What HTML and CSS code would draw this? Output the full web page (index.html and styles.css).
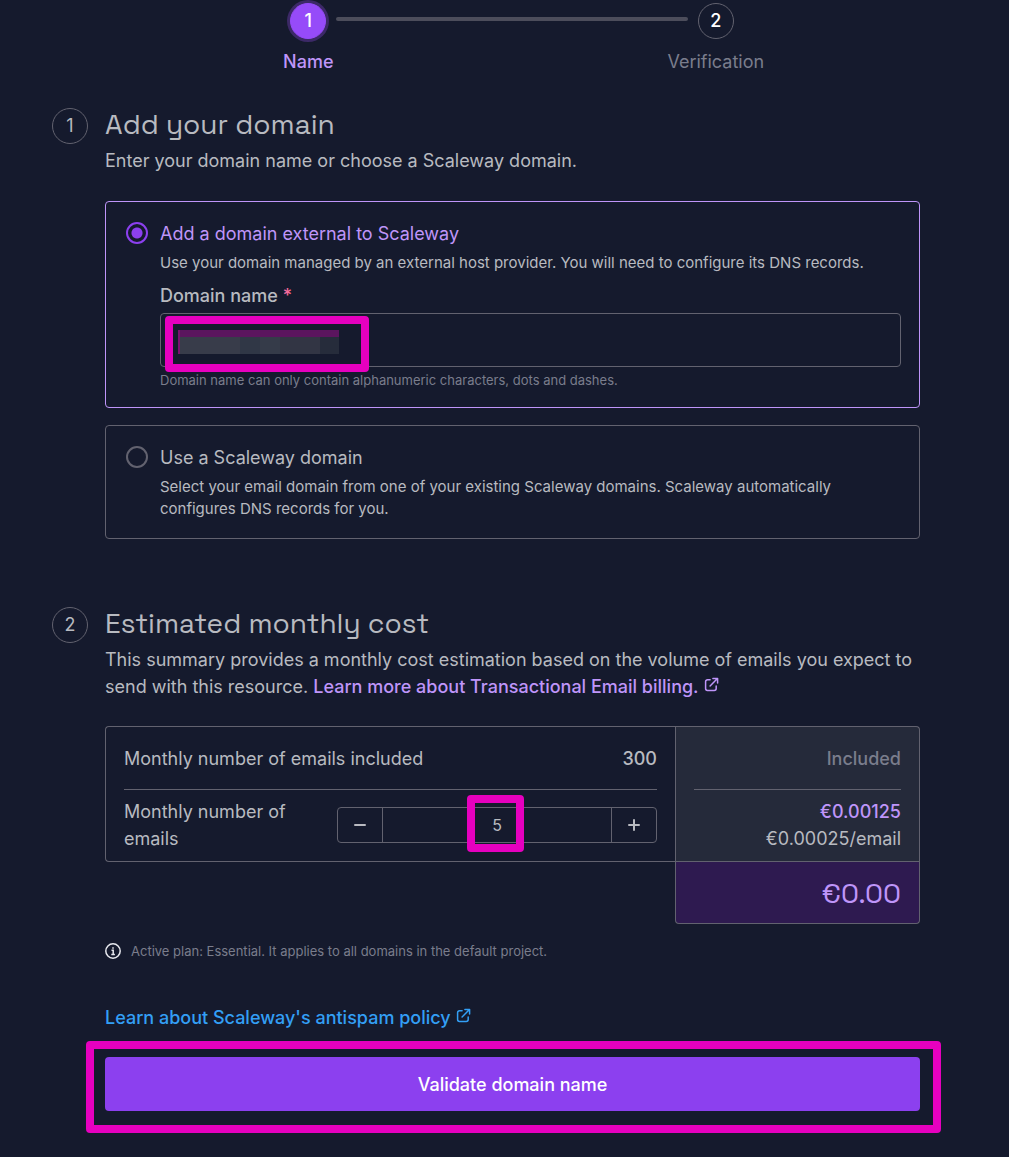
FILE: index.html
```html
<!DOCTYPE html>
<html lang="en">
<head>
<meta charset="utf-8">
<meta name="viewport" content="width=device-width, initial-scale=1">
<title>Add a domain</title>
<link rel="stylesheet" href="styles.css">
</head>
<body>
<form class="page">
  <ol class="progress">
    <li class="progress-step current"><span class="dot">1</span><span>Name</span></li>
    <li class="progress-line" aria-hidden="true"></li>
    <li class="progress-step"><span class="dot">2</span><span>Verification</span></li>
  </ol>

  <section class="section">
    <span class="section-number">1</span>
    <div class="section-body">
      <h2 class="title">Add your domain</h2>
      <p class="intro">Enter your domain name or choose a Scaleway domain.</p>
      <div class="options">
        <div class="option selected">
          <input class="radio" type="radio" name="kind" id="external" checked>
          <div class="option-body">
            <label class="option-title" for="external">Add a domain external to Scaleway</label>
            <p class="option-text">Use your domain managed by an external host provider. You will need to configure its DNS records.</p>
            <label class="field-label" for="domain">Domain name <span class="required">*</span></label>
            <div class="field">
              <input class="text-input" type="text" id="domain" aria-describedby="hint">
              <div class="highlight field-highlight"><div class="redacted"></div></div>
            </div>
            <p class="hint" id="hint">Domain name can only contain alphanumeric characters, dots and dashes.</p>
          </div>
        </div>
        <div class="option">
          <input class="radio" type="radio" name="kind" id="internal">
          <div class="option-body">
            <label class="option-title" for="internal">Use a Scaleway domain</label>
            <p class="option-text">Select your email domain from one of your existing Scaleway domains. Scaleway automatically configures DNS records for you.</p>
          </div>
        </div>
      </div>
    </div>
  </section>

  <section class="section">
    <span class="section-number">2</span>
    <div class="section-body">
      <h2 class="title">Estimated monthly cost</h2>
      <p class="intro">This summary provides a monthly cost estimation based on the volume of emails you expect to send with this resource. <a class="link" href="#">Learn more about Transactional Email billing.<svg class="external" viewBox="0 0 16 16" aria-hidden="true"><path d="M6.5 3H3.7A2 2 0 0 0 1.700 5v7.300a2 2 0 0 0 2 2H11a2 2 0 0 0 2-2V9.500M9.500 1.500h5v5M14.300 1.700 6.500 9.500"/></svg></a></p>

      <table class="cost">
        <tbody>
          <tr>
            <td class="item"><div class="line first"><span>Monthly number of emails included</span><strong>300</strong></div></td>
            <td class="price"><div class="line first muted">Included</div></td>
          </tr>
          <tr class="last">
            <td class="item">
              <div class="line">
                <label class="quantity-label" for="quantity">Monthly number of emails</label>
                <div class="quantity">
                  <button class="quantity-button" type="button" aria-label="Decrease"><svg viewBox="0 0 12 12"><path d="M1 6h10"/></svg></button>
                  <input class="quantity-input" id="quantity" type="text" inputmode="numeric" value="5">
                  <button class="quantity-button" type="button" aria-label="Increase"><svg viewBox="0 0 12 12"><path d="M1 6h10M6 1v10"/></svg></button>
                  <div class="highlight quantity-highlight"></div>
                </div>
              </div>
            </td>
            <td class="price"><div class="line amounts"><strong class="accent">€0.00125</strong><span>€0.00025/email</span></div></td>
          </tr>
          <tr>
            <td></td>
            <td class="total">€0.00</td>
          </tr>
        </tbody>
      </table>

      <p class="plan"><svg class="info" viewBox="0 0 16 16" aria-hidden="true"><circle cx="8" cy="8" r="7.200"/><path d="M6.500 7.300H8.200V11.300M6.300 11.500h3.600M8 4.200v1.600"/></svg>Active plan: Essential. It applies to all domains in the default project.</p>
      <p class="policy"><a class="link info-link" href="#">Learn about Scaleway's antispam policy<svg class="external" viewBox="0 0 16 16" aria-hidden="true"><path d="M6.500 3H3.700A2 2 0 0 0 1.700 5v7.300a2 2 0 0 0 2 2H11a2 2 0 0 0 2-2V9.500M9.500 1.500h5v5M14.300 1.700 6.500 9.500"/></svg></a></p>
      <div class="submit-area">
        <button class="submit" type="submit">Validate domain name</button>
        <div class="highlight submit-highlight"></div>
      </div>
    </div>
  </section>
</form>
</body>
</html>
```
FILE: styles.css
```css
* { box-sizing: border-box; }

:root {
  --bg: #151a2d;
  --text: #b8bac0;
  --muted: #7a7d8c;
  --border: #62626f;
  --accent: #bf95f9;
  --primary: #8c40ef;
  --mark: #e600bf;
}

body {
  margin: 0;
  background: var(--bg);
  color: var(--text);
  font: 400 18px/27px Inter, "Liberation Sans", sans-serif;
}

p, h2, ol { margin: 0; padding: 0; }
strong { font-weight: 500; }
input, button { font: inherit; color: inherit; }

.page { padding: 3px 89px 46px 52px; }

/* Progress */
.progress {
  display: grid;
  grid-template-columns: 96px 1fr 96px;
  margin: 0 18% 33px 24%;
  list-style: none;
}
.progress-step {
  display: flex;
  flex-direction: column;
  align-items: center;
  gap: 9px;
  color: var(--muted);
}
.progress-step.current { color: var(--accent); font-weight: 500; }
.dot {
  width: 36px;
  height: 36px;
  border: 1px solid var(--border);
  border-radius: 50%;
  color: #fff;
  font-weight: 500;
  line-height: 34px;
  text-align: center;
}
.current .dot {
  background: #964bf9;
  border-color: #964bf9;
  box-shadow: 0 0 0 3px #3c2967;
}
.progress-line {
  height: 4px;
  margin: 14px -20px 0;
  border-radius: 2px;
  background: #4c4d5b;
}

/* Sections */
.section {
  display: grid;
  grid-template-columns: 36px minmax(0, 1fr);
  column-gap: 17px;
}
.section + .section { margin-top: 68px; }
.section-number {
  height: 36px;
  border: 1px solid var(--border);
  border-radius: 50%;
  line-height: 34px;
  text-align: center;
}
.title {
  margin-bottom: 7px;
  font: 400 28px/32px "Space Grotesk", Inter, sans-serif;
}

/* Domain options */
.options { display: grid; gap: 17px; margin-top: 27px; }
.option {
  display: flex;
  gap: 12px;
  padding: 18px 18px 18px 20px;
  border: 1px solid var(--border);
  border-radius: 4px;
}
.option.selected { border-color: var(--accent); }
.option-body { flex: 1; min-width: 0; }
.option-title, .field-label { display: block; }
.selected .option-title { color: var(--accent); }
.option-text { margin-top: 5px; font-size: 15px; line-height: 22px; }
.radio {
  flex: none;
  appearance: none;
  width: 22px;
  height: 22px;
  margin: 2px 0 0;
  border: 2px solid var(--border);
  border-radius: 50%;
}
.radio:checked {
  border-color: var(--primary);
  background: radial-gradient(circle, var(--primary) 5px, transparent 6px);
}
.field-label { margin: 8px 0 4px; font-weight: 500; }
.required { color: #f66c9c; }
.field { position: relative; }
.text-input {
  display: block;
  width: 100%;
  height: 54px;
  padding: 0 16px;
  border: 1px solid var(--border);
  border-radius: 4px;
  background: transparent;
}
.hint { margin-top: 4px; color: var(--muted); font-size: 13px; line-height: 18px; }

/* Callout frames laid over the controls */
.highlight {
  position: absolute;
  border: 8px solid var(--mark);
  border-radius: 4px;
  pointer-events: none;
}
.field-highlight { top: 3px; left: 5px; width: 204px; height: 56px; padding: 6px 5px; }
.redacted {
  width: 161px;
  height: 24px;
  border-left: 2px solid #7a126f;
  background:
    linear-gradient(#5b155e, #5b155e) 0 0 / 100% 7px no-repeat,
    linear-gradient(90deg, #383c4a 60px, #303746 60px 80px, #353b49 80px 100px, #323544 100px 140px, #262c3b 140px);
}

/* Cost summary */
.cost {
  width: 100%;
  margin-top: 26px;
  border-spacing: 0;
  table-layout: fixed;
}
.cost td { padding: 0; vertical-align: top; }
.cost .item {
  padding: 0 18px;
  border-left: 1px solid var(--border);
}
.cost .price {
  width: 245px;
  padding: 0 18px;
  border: 0 solid var(--border);
  border-width: 0 1px;
  background: #252a3a;
  text-align: right;
}
.cost tr:first-child td { border-top: 1px solid var(--border); }
.cost tr:first-child .item { border-top-left-radius: 4px; }
.cost tr:first-child .price { border-top-right-radius: 4px; }
.cost .last td { height: 72px; border-bottom: 1px solid var(--border); }
.cost .last .item { border-bottom-left-radius: 4px; }
.line {
  display: flex;
  align-items: center;
  justify-content: space-between;
  height: 70px;
}
.line.first { height: 63px; border-bottom: 1px solid var(--border); }
.line.muted { justify-content: flex-end; color: var(--muted); font-weight: 500; }
.line.amounts { flex-direction: column; align-items: flex-end; justify-content: center; }
.accent { color: var(--accent); }
.quantity-label { width: 170px; }
.quantity {
  position: relative;
  display: flex;
  width: 60%;
  height: 36px;
  border: 1px solid var(--border);
  border-radius: 4px;
}
.quantity-button {
  display: grid;
  place-items: center;
  width: 44px;
  padding: 0;
  border: 0;
  background: transparent;
}
.quantity-button svg { width: 12px; height: 12px; stroke: currentColor; stroke-width: 2; stroke-linecap: round; }
.quantity-input {
  flex: 1;
  min-width: 0;
  padding: 0;
  border: 0 solid var(--border);
  border-width: 0 1px;
  background: transparent;
  font-size: 16px;
  text-align: center;
}
.quantity-highlight { top: -13px; left: calc(50% - 30px); width: 57px; height: 57px; }
.cost .total {
  height: 62px;
  padding: 0 18px;
  border: 1px solid var(--border);
  border-top: 0;
  border-radius: 0 0 4px 4px;
  background: #2e1a50;
  color: var(--accent);
  font: 400 28px/36px "Space Grotesk", Inter, sans-serif;
  text-align: right;
  vertical-align: middle;
}

/* Footer */
.plan {
  display: flex;
  align-items: center;
  gap: 10px;
  margin-top: 18px;
  color: var(--muted);
  font-size: 13px;
  line-height: 18px;
}
.info { width: 16px; height: 16px; fill: none; stroke: #e8e9ef; stroke-width: 1.5; }
.link { color: var(--accent); font-weight: 500; text-decoration: none; }
.info-link { color: #339ff5; }
.external {
  width: 15px;
  height: 15px;
  margin-left: 5px;
  vertical-align: 1px;
  fill: none;
  stroke: currentColor;
  stroke-width: 1.6;
  stroke-linecap: round;
  stroke-linejoin: round;
}
.policy { margin: 44px 0 26px; }
.submit-area { position: relative; }
.submit {
  display: block;
  width: 100%;
  height: 54px;
  border: 0;
  border-radius: 4px;
  background: var(--primary);
  color: #fff;
  font-weight: 500;
}
.submit-highlight { inset: -16px -21px -22px -19px; }
```
